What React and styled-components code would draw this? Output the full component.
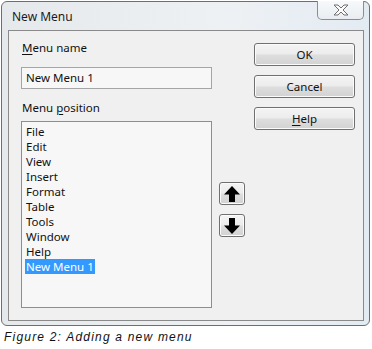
import React from "react";
import styled, { createGlobalStyle } from "styled-components";

const GlobalStyle = createGlobalStyle`
  html, body {
    margin: 0;
    padding: 0;
    background: #ffffff;
  }
  body {
    font-family: "Noto Sans", "Open Sans", sans-serif;
    font-size: 11.5px;
    color: #111;
  }
`;

const menuItems = [
  "File",
  "Edit",
  "View",
  "Insert",
  "Format",
  "Table",
  "Tools",
  "Window",
  "Help",
  "New Menu 1",
];

export default function App() {
  return (
    <>
      <GlobalStyle />
      <Page>
        <Window>
          <TitleBar>
            <Title>New Menu</Title>
            <CloseButton>
              <svg width="16" height="12" viewBox="0 0 16 12">
                <polygon
                  points="1,1 5,1 8,4 11,1 15,1 10,6 15,11 11,11 8,8 5,11 1,11 6,6"
                  fill="#fbfbfb"
                  stroke="#6f6f6f"
                  strokeWidth="1"
                  strokeLinejoin="round"
                />
              </svg>
            </CloseButton>
          </TitleBar>
          <Panel>
            <LeftColumn>
              <Label>
                <u>M</u>enu name
              </Label>
              <TextInput>New Menu 1</TextInput>
              <Label $gap>
                Menu <u>p</u>osition
              </Label>
              <ListBox>
                {menuItems.map((item) => (
                  <ListItem key={item} $selected={item === "New Menu 1"}>
                    {item}
                  </ListItem>
                ))}
              </ListBox>
            </LeftColumn>
            <ArrowColumn>
              <ArrowButton>
                <svg width="18" height="18" viewBox="0 0 18 18">
                  <polygon points="9,1 17,9.5 12,9.5 12,17 6,17 6,9.5 1,9.5" fill="#000" />
                </svg>
              </ArrowButton>
              <ArrowButton>
                <svg width="18" height="18" viewBox="0 0 18 18">
                  <polygon points="9,17 17,8.5 12,8.5 12,1 6,1 6,8.5 1,8.5" fill="#000" />
                </svg>
              </ArrowButton>
            </ArrowColumn>
            <ButtonColumn>
              <PushButton>OK</PushButton>
              <PushButton>Cancel</PushButton>
              <PushButton>
                <u>H</u>elp
              </PushButton>
            </ButtonColumn>
          </Panel>
        </Window>
        <Caption>Figure 2: Adding a new menu</Caption>
      </Page>
    </>
  );
}

const Page = styled.div`
  width: 372px;
  height: 349px;
  padding: 1px 0 0 1px;
  box-sizing: border-box;
  overflow: hidden;
`;

const Window = styled.div`
  width: 369px;
  height: 325px;
  box-sizing: border-box;
  border: 1px solid #6e6e6e;
  border-radius: 6px;
  background: linear-gradient(90deg, #e6e9ec 0%, #eef1f4 60%, #e3ebf2 100%);
  display: flex;
  flex-direction: column;
  padding: 0 5px 4px 6px;
`;

const TitleBar = styled.div`
  height: 28px;
  display: flex;
  align-items: flex-start;
  justify-content: space-between;
`;

const Title = styled.div`
  padding: 7px 0 0 4px;
  font-size: 12px;
  line-height: 15px;
  color: #1b1b1b;
`;

const CloseButton = styled.div`
  width: 47px;
  height: 19px;
  margin-top: -1px;
  box-sizing: border-box;
  border: 1px solid #8d8d8d;
  border-top: none;
  border-radius: 0 0 5px 5px;
  background: linear-gradient(180deg, #f7f9fb 0%, #e9edf1 100%);
  display: flex;
  align-items: center;
  justify-content: center;
`;

const Panel = styled.div`
  flex: 1;
  box-sizing: border-box;
  border: 1px solid #8a8a8a;
  background: #f0f0f0;
  display: flex;
  padding: 9px 0 0 12px;
`;

const LeftColumn = styled.div`
  width: 191px;
  display: flex;
  flex-direction: column;
`;

const Label = styled.div`
  line-height: 15px;
  margin-top: ${(p) => (p.$gap ? "11px" : "0")};
  margin-bottom: ${(p) => (p.$gap ? "6px" : "12px")};
  padding-left: 1px;
  u {
    text-decoration-thickness: 1px;
    text-underline-offset: 2px;
  }
`;

const TextInput = styled.div`
  height: 22px;
  box-sizing: border-box;
  border: 1px solid #a5a5a5;
  background: #f7f7f7;
  padding: 0 4px;
  line-height: 20px;
`;

const ListBox = styled.div`
  height: 187px;
  box-sizing: border-box;
  border: 1px solid #8e8e8e;
  background: #f7f7f7;
  padding: 2px 0 0 3px;
`;

const ListItem = styled.div`
  width: fit-content;
  line-height: 15px;
  padding: 0 1px;
  background: ${(p) => (p.$selected ? "#3399ff" : "transparent")};
  color: ${(p) => (p.$selected ? "#ffffff" : "#111")};
`;

const ArrowColumn = styled.div`
  width: 26px;
  margin-left: 7px;
  padding-top: 142px;
  display: flex;
  flex-direction: column;
  gap: 9px;
`;

const buttonFace = `
  box-sizing: border-box;
  border: 1px solid #707070;
  border-radius: 3px;
  background: linear-gradient(180deg, #f4f4f4 0%, #ececec 48%, #dedede 52%, #d2d2d2 100%);
  box-shadow: inset 0 0 0 1px #fbfbfb;
`;

const ArrowButton = styled.div`
  ${buttonFace}
  width: 26px;
  height: 23px;
  display: flex;
  align-items: center;
  justify-content: center;
`;

const ButtonColumn = styled.div`
  width: 101px;
  margin-left: 9px;
  padding-top: 3px;
  display: flex;
  flex-direction: column;
  gap: 9px;
`;

const PushButton = styled.div`
  ${buttonFace}
  height: 23px;
  display: flex;
  align-items: center;
  justify-content: center;
  color: #111;
  u {
    text-decoration-thickness: 1px;
    text-underline-offset: 2px;
  }
`;

const Caption = styled.div`
  margin: 4px 0 0 3px;
  font-family: "Liberation Sans", Arial, sans-serif;
  font-style: italic;
  font-size: 12px;
  letter-spacing: 1.2px;
  line-height: 15px;
  color: #111;
`;
